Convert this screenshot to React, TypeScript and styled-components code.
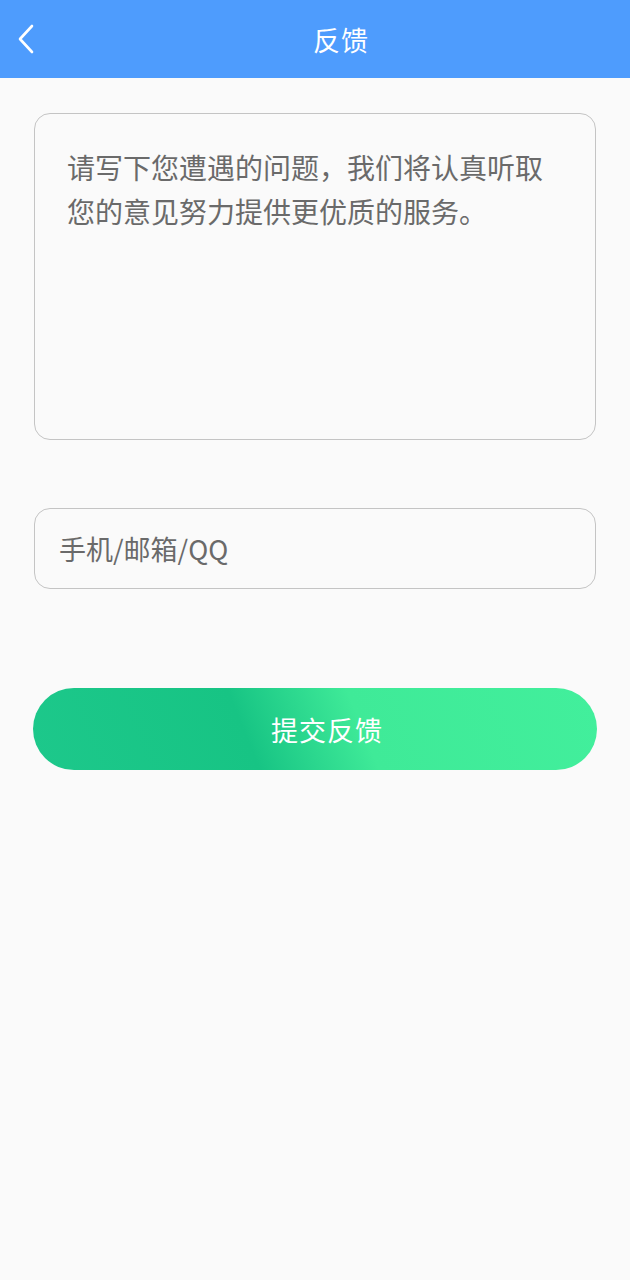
import { FC } from 'react';
import styled, { createGlobalStyle } from 'styled-components';

const GlobalStyle = createGlobalStyle`
    html, body {
        margin: 0;
        padding: 0;
        background-color: #fafafa;
    }
    body {
        font-family: "Noto Sans CJK SC", "Noto Sans", sans-serif;
    }
`;

const StyledPage = styled.div`
    display: flex;
    flex-direction: column;
    min-height: 1280px;
    background-color: #fafafa;
`;

const StyledHeader = styled.header`
    position: relative;
    display: flex;
    align-items: center;
    justify-content: center;
    height: 78px;
    padding-left: 52px;
    background-color: #4e9cfd;
`;

const StyledBack = styled.button`
    position: absolute;
    left: 12px;
    top: 50%;
    transform: translateY(-50%);
    display: flex;
    align-items: center;
    justify-content: center;
    width: 28px;
    height: 40px;
    padding: 0;
    border: none;
    background: none;
    cursor: pointer;
`;

const StyledTitle = styled.h1`
    margin: 0;
    font-size: 27px;
    font-weight: 400;
    color: #ffffff;
    letter-spacing: 1px;
`;

const StyledForm = styled.form`
    display: flex;
    flex-direction: column;
    padding: 35px 34px 0;
`;

const StyledTextArea = styled.textarea`
    box-sizing: border-box;
    width: 100%;
    height: 327px;
    padding: 31px 32px;
    border: 1.5px solid #c4c4c4;
    border-radius: 16px;
    background-color: #fafafa;
    font-family: inherit;
    font-size: 28px;
    line-height: 44px;
    color: #333;
    resize: none;
    outline: none;
    &::placeholder {
        color: #6a6a6a;
    }
`;

const StyledInput = styled.input`
    box-sizing: border-box;
    width: 100%;
    height: 81px;
    margin-top: 68px;
    padding: 0 24px;
    border: 1.5px solid #c4c4c4;
    border-radius: 16px;
    background-color: #fafafa;
    font-family: inherit;
    font-size: 27px;
    color: #333;
    outline: none;
    &::placeholder {
        color: #6a6a6a;
    }
`;

const StyledSubmit = styled.button`
    width: calc(100% + 2px);
    margin: 99px -1px 0;
    height: 82px;
    padding: 0 0 0 24px;
    border: none;
    border-radius: 41px;
    background: linear-gradient(
        68deg,
        #1dc88b 0%,
        #17c484 38%,
        #3fea98 58%,
        #42ef9c 100%
    );
    font-family: inherit;
    font-size: 27px;
    color: #ffffff;
    letter-spacing: 1px;
    cursor: pointer;
`;

const BackIcon: FC = () => (
    <svg width="18" height="30" viewBox="0 0 18 30" fill="none">
        <path
            d="M15 2 L3 15 L15 28"
            stroke="#ffffff"
            strokeWidth="2.6"
            strokeLinecap="round"
            strokeLinejoin="round"
        />
    </svg>
);

const App: FC = () => (
    <StyledPage>
        <GlobalStyle />
        <StyledHeader>
            <StyledBack type="button" aria-label="返回">
                <BackIcon />
            </StyledBack>
            <StyledTitle>反馈</StyledTitle>
        </StyledHeader>
        <StyledForm onSubmit={e => e.preventDefault()}>
            <StyledTextArea placeholder="请写下您遭遇的问题，我们将认真听取您的意见努力提供更优质的服务。" />
            <StyledInput placeholder="手机/邮箱/QQ" />
            <StyledSubmit type="submit">提交反馈</StyledSubmit>
        </StyledForm>
    </StyledPage>
);

export default App;
